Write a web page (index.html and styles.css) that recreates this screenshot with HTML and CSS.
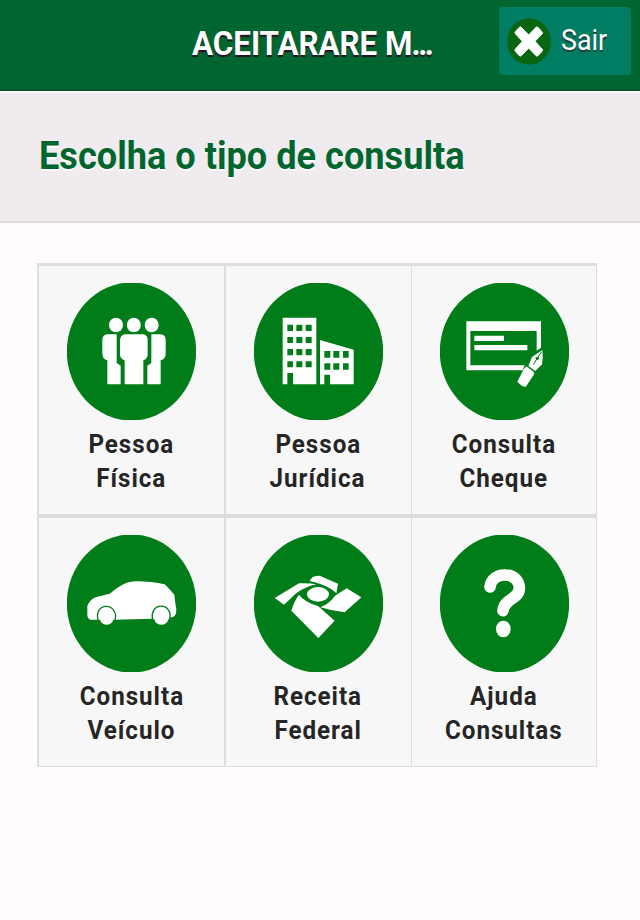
FILE: index.html
```html
<!DOCTYPE html>
<html lang="pt-BR">
<head>
<meta charset="utf-8">
<title>Consultas</title>
<link rel="stylesheet" href="styles.css">
</head>
<body>
<header class="topbar">
  <h1 class="topbar-title"><span>ACEITARARE M<i class="dots">...</i></span></h1>
  <button class="exit">
    <svg class="exit-icon" viewBox="562 53 132 141" preserveAspectRatio="none">
      <ellipse cx="628" cy="123.500" rx="65.500" ry="70" fill="#096610"/>
      <path d="M604 80 L627 104 L650 80 Q654 79 657 83 L667 95 Q670 98 667 101 L646 123 L667 146 Q670 149 667 153 L655 166 Q651 169 648 165 L627 143 L606 165 Q603 169 599 166 L587 153 Q584 149 588 145 L608 123 L588 101 Q584 97 587 94 L599 81 Q602 78 604 80Z" fill="#fff" stroke="#fff" stroke-width="3"/>
    </svg>
    <span class="exit-label">Sair</span>
  </button>
</header>
<section class="heading"><h2><span>Escolha o tipo de consulta</span></h2></section>
<main class="grid">
  <a class="cell">
    <svg class="icon" viewBox="109 83 387 411" preserveAspectRatio="none">
      <ellipse class="disc" cx="302.500" cy="288.500" rx="194" ry="207"/>
      <g fill="#fff">
        <ellipse cx="256" cy="209" rx="21" ry="22"/><ellipse cx="309.500" cy="209" rx="21" ry="22"/><ellipse cx="363" cy="209" rx="21" ry="22"/>
        <path d="M230 237H258V323L270 331V387H230V315Q215 312 215 294V254Q215 239 230 237Z"/>
        <path d="M390 237H362V323L350 331V387H390V315Q405 312 405 294V254Q405 239 390 237Z"/>
        <path d="M284 237H337Q351 239 351 254V298Q350 311 338 315V387H282V315Q269 311 268 298V254Q269 239 284 237Z"/>
      </g>
    </svg>
    <span class="label">Pessoa</span><span class="label">Física</span>
  </a>
  <a class="cell">
    <svg class="icon" viewBox="102 83 387 411" preserveAspectRatio="none">
      <ellipse class="disc" cx="295.500" cy="288.500" rx="194" ry="207"/>
      <path fill="#fff" d="M188 187H289V387H219V353H202V387H188ZM300 254L401 283V387H330V358H313V387H300Z"/>
      <path class="disc" d="M202 208h17v19h-17zM229 208h18v19h-18zM257 208h18v19h-18zM202 245h17v18h-17zM229 245h18v18h-18zM257 245h18v18h-18zM202 281h17v19h-17zM229 281h18v19h-18zM257 281h18v19h-18zM202 318h17v18h-17zM229 318h18v18h-18zM257 318h18v18h-18zM313 287h18v20h-18zM340 287h18v20h-18zM369 287h17v20h-17zM313 324h18v19h-18zM340 324h18v19h-18zM369 324h17v19h-17z"/>
    </svg>
    <span class="label">Pessoa</span><span class="label">Jurídica</span>
  </a>
  <a class="cell">
    <svg class="icon" viewBox="106 83 387 411" preserveAspectRatio="none">
      <ellipse class="disc" cx="299.500" cy="288.500" rx="194" ry="207"/>
      <g fill="#fff">
        <path d="M185 198H409V277L396 286V227H197V330H360L354 345H185Z"/>
        <path d="M209 241H298V257H209ZM209 269H368V285H209Z"/>
        <path d="M413 284L382 305L371 332L392 347L412 327Q416 304 413 284Z"/>
        <path d="M365 333L385 348L389 356L363 395L351 391L338 379L357 342Z"/>
      </g>
      <path d="M411 289L399 307L386 328" fill="none" stroke="#007d18" stroke-width="3"/><ellipse class="disc" cx="398" cy="309" rx="5" ry="5"/>
    </svg>
    <span class="label">Consulta</span><span class="label">Cheque</span>
  </a>
  <a class="cell">
    <svg class="icon" viewBox="109 74 387 411" preserveAspectRatio="none">
      <ellipse class="disc" cx="302.500" cy="279.500" rx="194" ry="207"/>
      <path fill="#fff" d="M180 328Q169 325 170 310V287Q178 267 195 261L237 250C258 235 280 214 314 213C345 213 380 217 402 222L414 234L431 253L435 286Q439 296 436 309Q434 318 426 320L417 322L365 325L254 328Z"/>
      <g fill="#fff" stroke="#007d18" stroke-width="4"><path d="M202 329Q198 313 204 301A27 28 0 0 1 249 300Q258 313 253 329"/><path d="M366 327Q362 313 369 300A27 28 0 0 1 414 300Q421 311 417 323"/></g>
      <path class="disc" d="M202 328H252V340H202ZM367 326H415V340H367Z"/>
      <ellipse cx="228" cy="317" rx="23" ry="26" fill="#fff"/><ellipse cx="392" cy="317" rx="24" ry="26" fill="#fff"/>
    </svg>
    <span class="label">Consulta</span><span class="label">Veículo</span>
  </a>
  <a class="cell">
    <svg class="icon" viewBox="102 74 387 411" preserveAspectRatio="none">
      <ellipse class="disc" cx="295.500" cy="279.500" rx="194" ry="207"/>
      <g fill="#fff">
        <path d="M164 263L237 219Q265 217 289 222Q253 230 226 251L192 283Z"/>
        <path d="M268 212L278 200Q287 196 299 196L354 220L349 249Q333 232 301 221Q284 215 268 212Z"/>
        <ellipse cx="294" cy="252" rx="33" ry="22"/>
        <path d="M237 253Q253 275 294 287L344 331L295 383L214 301Q222 273 237 253Z"/>
        <path d="M301 291Q331 278 345 256L380 234L424 261L374 306Q337 302 301 291Z"/>
      </g>
    </svg>
    <span class="label">Receita</span><span class="label">Federal</span>
  </a>
  <a class="cell">
    <svg class="icon" viewBox="106 74 387 411" preserveAspectRatio="none">
      <ellipse class="disc" cx="299.500" cy="279.500" rx="194" ry="207"/>
      <path d="M256 230C259 206 277 194 300 194C326 194 344 210 344 234C344 267 299 263 295 301" fill="none" stroke="#fff" stroke-width="35" stroke-linecap="round"/>
      <ellipse cx="296" cy="356" rx="22" ry="25" fill="#fff"/>
    </svg>
    <span class="label">Ajuda</span><span class="label">Consultas</span>
  </a>
</main>
</body>
</html>
```
FILE: styles.css
```css
* { box-sizing: border-box; }
body {
  margin: 0;
  min-height: 920px;
  background: #fffbff;
  font-family: Roboto, "Liberation Sans", sans-serif;
}
.topbar {
  position: relative;
  height: 91px;
  background: #006630;
  border-bottom: 2px solid #0b5530;
  display: flex;
  justify-content: center;
}
h1, h2 { margin: 0; font-weight: 700; white-space: nowrap; }
h1 span, h2 span { display: inline-block; transform-origin: 0 50%; }
.topbar-title {
  width: 257px;
  font-size: 33.5px;
  line-height: 88px;
  color: #fff;
  text-shadow: 0 2px 1px #2a1024;
}
.topbar-title span { transform: scaleX(.935); }
.dots { font-style: normal; letter-spacing: -2.6px; margin-left: -1px; }
.exit {
  position: absolute;
  left: 499px;
  top: 7px;
  width: 132px;
  height: 68px;
  padding: 0 0 0 8px;
  border: 0;
  border-radius: 4px;
  background: #007d63;
  color: #fff;
  display: flex;
  align-items: center;
  font: 400 29px/64px Roboto, "Liberation Sans", sans-serif;
  text-shadow: 0 2px 1px #20383a;
}
.exit-icon { width: 44px; height: 47px; }
.exit-label {
  margin: -2px 0 0 10px;
  transform: scaleX(.925);
  transform-origin: 0 50%;
}
.heading {
  height: 132px;
  padding-left: 39px;
  background: #efebef;
  border-top: 2px solid #fff;
  border-bottom: 2px solid #dcdcdc;
  font-size: 26px;
}
h2 {
  font-size: 39px;
  line-height: 126px;
  color: #00662e;
  text-shadow: 0 2px 0 #fff;
}
h2 span { transform: scaleX(.927); }
.grid {
  width: 560px;
  height: 504px;
  margin: 40px 0 0 37px;
  border: solid #dcdfdc;
  border-width: 3px 1px 1px 2px;
  background: #dcdcdc;
  display: grid;
  grid-template-columns: 185px 185px 184px;
  grid-template-rows: 248px 248px;
  column-gap: 1.5px;
  row-gap: 4px;
}
.cell {
  background: #f7f7f7;
  padding-top: 17px;
  display: flex;
  flex-direction: column;
  align-items: center;
}
.icon { width: 129px; height: 137px; margin-bottom: 8px; }
.disc { fill: #007d18; }
.label {
  font-size: 25px;
  font-weight: 700;
  line-height: 34px;
  letter-spacing: 1px;
  color: #252525;
  text-shadow: 0 1px 0 #fff;
  transform: scaleX(.968);
}
```
